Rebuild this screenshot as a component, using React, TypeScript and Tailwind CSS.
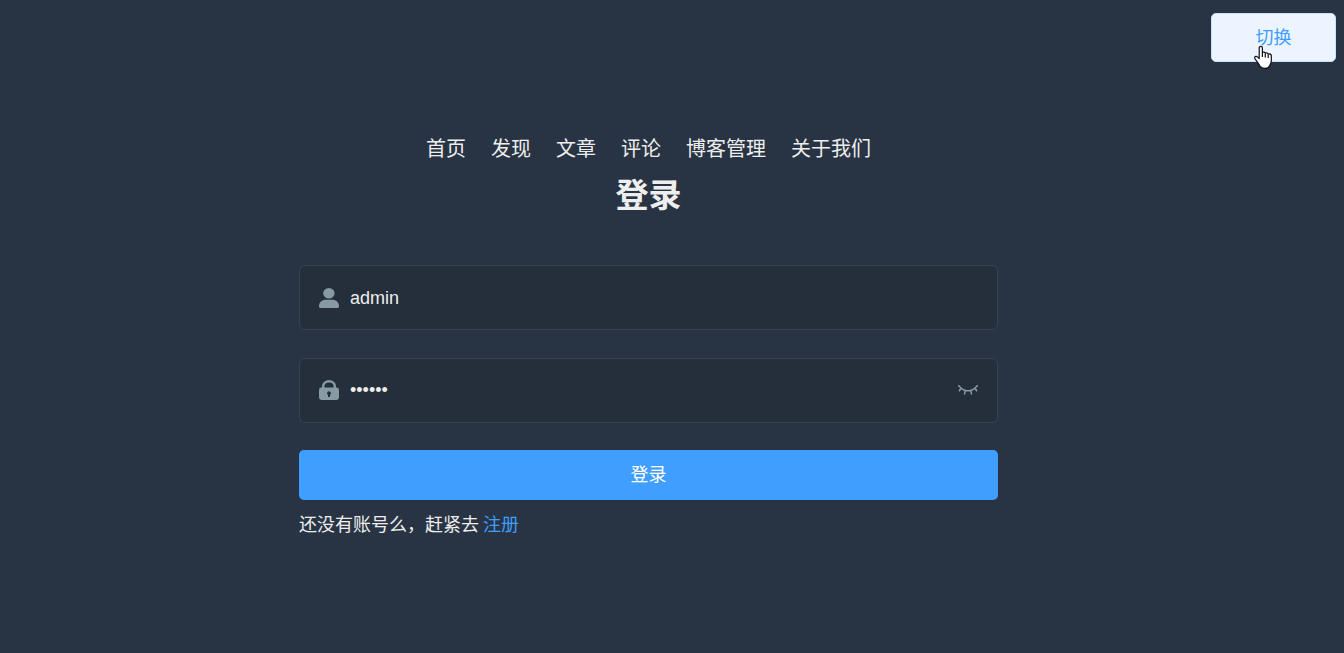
import { useState } from 'react';

const NAV_ITEMS = ['首页', '发现', '文章', '评论', '博客管理', '关于我们'];

function UserIcon() {
  return (
    <svg viewBox="0 0 20 20" className="size-5 shrink-0" fill="currentColor" aria-hidden="true">
      <ellipse cx="9.900" cy="5.200" rx="5.700" ry="5.200" />
      <path d="M0 18.200C0 14.500 3 11.800 6.800 11.800h6.400c3.800 0 6.800 2.700 6.800 6.400 0 1.200-.5 1.700-1.400 1.700H1.400C.5 19.900 0 19.400 0 18.200Z" />
    </svg>
  );
}

function LockIcon() {
  return (
    <svg viewBox="0 0 20 20" className="size-5 shrink-0" fill="currentColor" aria-hidden="true">
      <path d="M4.200 8V6.300C4.200 3.200 6.800 1.200 10 1.200s5.800 2 5.800 5.100V8" fill="none" stroke="currentColor" strokeWidth="2.400" />
      <path
        fillRule="evenodd"
        d="M2.400 7.600h15.200A2.400 2.400 0 0 1 20 10v7.600a2.400 2.400 0 0 1-2.400 2.400H2.400A2.400 2.400 0 0 1 0 17.600V10a2.400 2.400 0 0 1 2.400-2.400ZM10 11.300a2 2 0 0 0-1 3.700v2.100h2V15a2 2 0 0 0-1-3.700Z"
      />
    </svg>
  );
}

function ClosedEyeIcon() {
  return (
    <svg viewBox="0 0 20 12" className="h-3 w-5" fill="none" stroke="currentColor" strokeWidth="1.500" aria-hidden="true">
      <path d="M.3 1.200C3 4.700 6.300 6.800 10 6.800s7-2.100 9.700-5.600M3.300 4 1 7.200M7.300 6.400l-.9 4.200M12.700 6.400l.9 4.200M16.700 4l2.300 3.200" />
    </svg>
  );
}

function HandCursor() {
  return (
    <svg viewBox="0 0 18 24" className="pointer-events-none absolute left-[43px] top-8 h-6 w-[18px]" aria-hidden="true">
      <path
        d="M5.200 2.900c0-2.100 3.200-2.100 3.200 0v4.700c.8-.8 2.600-.5 2.900.6.900-.6 2.700-.2 2.900.9 1.200-.5 3.100.1 3.100 1.600v5.300c0 2-.9 3-1.500 4.400-.7 1.700-2.300 3-4.900 3-2.700 0-4.200-.9-5.100-2.600-.8-1.700-2-3-3.100-4.700C1.500 14.700.6 13.700.6 12.700c0-1.400 1.700-1.800 2.900-.8l1.700 1.700Z"
        fill="#fff"
        stroke="#0b0f1a"
        strokeWidth="1.200"
        strokeLinejoin="round"
      />
      <path d="M8.400 7.500V12M11.300 8.500v4M14.200 9.500V13" stroke="#0b0f1a" strokeWidth="1.200" />
    </svg>
  );
}

export default function App() {
  const [username, setUsername] = useState('admin');
  const [password, setPassword] = useState('123456');
  const [visible, setVisible] = useState(false);

  const field =
    'flex h-[65px] items-center rounded-md border border-[#384350] bg-[#242f3b] px-[19px] text-[#889aa4]';
  const input =
    "ml-[11px] min-w-0 flex-1 bg-transparent font-['Liberation_Sans','Noto_Sans_CJK_SC',sans-serif] text-lg text-[#eee] outline-none";

  return (
    <div className="flex min-h-screen flex-col bg-[#283443] font-['Noto_Sans_CJK_SC',sans-serif] text-lg text-[#eee]">
      <header className="flex justify-end px-2 pt-[13px]">
        <div className="relative">
          <button
            type="button"
            className="block h-[49px] w-[125px] cursor-pointer rounded-[5px] border border-[#c6e2ff] bg-[#ecf5ff] pb-1 text-lg text-[#409eff]"
          >
            切换
          </button>
          <HandCursor />
        </div>
      </header>

      <main className="flex justify-center pt-[71px] pr-[47px]">
        <form className="w-full max-w-[699px]" onSubmit={(event) => event.preventDefault()}>
          <nav className="flex justify-center gap-[25px] text-xl leading-[30px]">
            {NAV_ITEMS.map((item) => (
              <a key={item} href="#">
                {item}
              </a>
            ))}
          </nav>
          <h1 className="mb-[50px] mt-2 text-center text-[33px] font-bold leading-[44px]">登录</h1>

          <div className={field}>
            <label htmlFor="username" aria-label="用户名">
              <UserIcon />
            </label>
            <input
              id="username"
              className={input}
              value={username}
              onChange={(event) => setUsername(event.target.value)}
            />
          </div>

          <div className={`mt-7 pb-0.5 ${field}`}>
            <label htmlFor="password" aria-label="密码">
              <LockIcon />
            </label>
            <input
              id="password"
              type={visible ? 'text' : 'password'}
              className={input}
              value={password}
              onChange={(event) => setPassword(event.target.value)}
            />
            <button
              type="button"
              aria-label="显示密码"
              className="cursor-pointer"
              onClick={() => setVisible(!visible)}
            >
              <ClosedEyeIcon />
            </button>
          </div>

          <button
            type="submit"
            className="mt-[27px] h-[50px] w-full cursor-pointer rounded-[5px] bg-[#409eff] pb-1 text-lg text-white"
          >
            登录
          </button>
          <p className="mt-[11px] leading-6">
            还没有账号么，赶紧去{' '}
            <a href="#" className="text-[#409eff]">
              注册
            </a>
          </p>
        </form>
      </main>
    </div>
  );
}
